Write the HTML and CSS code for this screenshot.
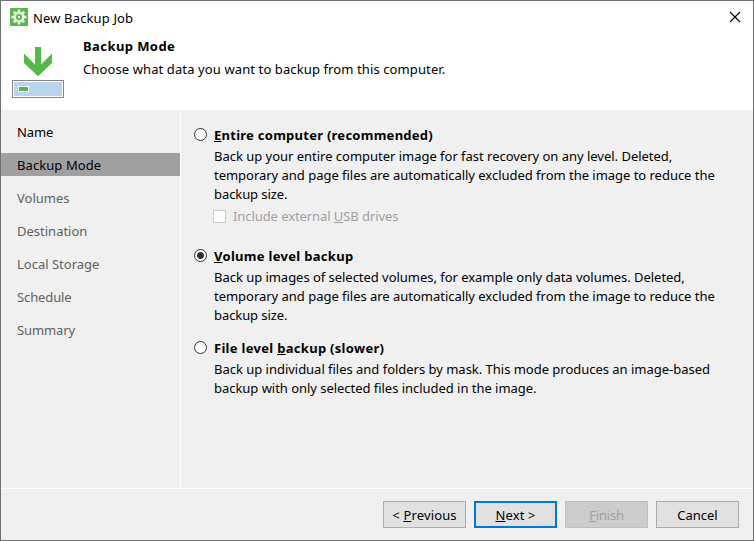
FILE: index.html
```html
<!DOCTYPE html>
<html lang="en">
<head>
<meta charset="utf-8">
<title>New Backup Job</title>
<link rel="stylesheet" href="styles.css">
</head>
<body>
<div class="window">
  <header class="header">
    <div class="titlebar">
      <svg class="gear" width="18" height="18" viewBox="0 0 18 18">
        <rect width="18" height="18" fill="#54b948"/>
        <g fill="#e6f5e4" transform="translate(9 9)">
          <rect x="-1.300" y="-7.500" width="2.600" height="15"/>
          <rect x="-1.300" y="-7.500" width="2.600" height="15" transform="rotate(45)"/>
          <rect x="-1.300" y="-7.500" width="2.600" height="15" transform="rotate(90)"/>
          <rect x="-1.300" y="-7.500" width="2.600" height="15" transform="rotate(135)"/>
          <circle r="5.500"/>
        </g>
        <circle cx="9" cy="9" r="3" fill="#54b948"/>
        <circle cx="9" cy="9" r="1.200" fill="#e6f5e4"/>
      </svg>
      <span class="title t-title">New Backup Job</span>
      <svg class="close" width="10" height="10" viewBox="0 0 10 10"><path d="M0 0L10 10M10 0L0 10" stroke="#000" stroke-width="1.1"/></svg>
    </div>
    <div class="intro">
      <svg class="drive" width="52" height="52" viewBox="0 0 52 52">
        <path d="M23 1h6v17.500l11-11v9.500L26 30.300 12 17V7.500l11 11z" fill="#54b948"/>
        <rect x=".5" y="34.500" width="51" height="17" fill="#fff" stroke="#848484"/>
        <rect x="2" y="36" width="48" height="14" fill="#bad4ed"/>
        <rect x="6" y="40" width="11" height="6" fill="#fff"/>
        <rect x="7" y="41" width="9" height="4" fill="#54b948"/>
      </svg>
      <div class="intro-text">
        <h1 class="heading"><span class="t-head">Backup Mode</span></h1>
        <p class="sub"><span class="t-sub">Choose what data you want to backup from this computer.</span></p>
      </div>
    </div>
  </header>
  <div class="body">
    <nav class="steps">
      <div class="step done"><span class="t-tight">Name</span></div>
      <div class="step current"><span class="t-wide">Backup Mode</span></div>
      <div class="step">Volumes</div>
      <div class="step">Destination</div>
      <div class="step">Local Storage</div>
      <div class="step"><span class="t-tight">Schedule</span></div>
      <div class="step"><span class="t-tight">Summary</span></div>
    </nav>
    <main class="options">
      <section class="option">
        <i class="radio"></i>
        <div>
          <h2><span class="t-o1"><u>E</u>ntire computer (recommended)</span></h2>
          <p><span class="t-a1">Back up your entire computer image for fast recovery on any level. Deleted,</span></p>
          <p><span class="t-a2">temporary and page files are automatically excluded from the image to reduce the</span></p>
          <p><span class="t-a3">backup size.</span></p>
          <div class="check"><i class="box"></i><span class="t-check">Include external <u>U</u>SB drives</span></div>
        </div>
      </section>
      <section class="option">
        <i class="radio on"></i>
        <div>
          <h2><span class="t-o2"><u>V</u>olume level backup</span></h2>
          <p><span class="t-b1">Back up images of selected volumes, for example only data volumes. Deleted,</span></p>
          <p><span class="t-a2">temporary and page files are automatically excluded from the image to reduce the</span></p>
          <p><span class="t-a3">backup size.</span></p>
        </div>
      </section>
      <section class="option">
        <i class="radio"></i>
        <div>
          <h2><span class="t-o3">File level <u>b</u>ackup (slower)</span></h2>
          <p><span class="t-c1">Back up individual files and folders by mask. This mode produces an image-based</span></p>
          <p><span class="t-c2">backup with only selected files included in the image.</span></p>
        </div>
      </section>
    </main>
  </div>
  <footer class="footer">
    <button class="btn"><span class="t-prev">&lt; <u>P</u>revious</span></button>
    <button class="btn primary"><span class="t-next"><u>N</u>ext &gt;</span></button>
    <button class="btn off"><span class="t-fin"><u>F</u>inish</span></button>
    <button class="btn"><span class="t-can">Cancel</span></button>
  </footer>
</div>
</body>
</html>
```
FILE: styles.css
```css
* { box-sizing: border-box; margin: 0; padding: 0; }
body { width: 754px; height: 541px; overflow: hidden; font: 13px/19px "Noto Sans", "Open Sans", sans-serif; color: #000; }
span { white-space: nowrap; }
u { text-decoration: underline; text-decoration-thickness: 1px; text-underline-offset: 1px; text-decoration-skip-ink: none; }

.window { width: 754px; height: 541px; border: 1px solid #707070; background: #f0f0f0; display: flex; flex-direction: column; }

.header { height: 109px; background: #fff; flex: none; }
.titlebar { height: 35px; padding: 7px 13px 0 9px; display: flex; align-items: flex-start; }
.title { margin-left: 5px; line-height: 20px; }
.close { margin: 4px 0 0 auto; overflow: visible; }
.intro { display: flex; padding-left: 11px; }
.drive { margin-top: 10px; }
.intro-text { margin: 1px 0 0 19px; }
.heading { font-size: 13px; line-height: 19px; }
.sub { margin-top: 4px; }

.body { height: 379px; border-bottom: 1px solid #fff; display: flex; flex: none; }
.steps { width: 180px; border-right: 1px solid #fff; padding-top: 10px; }
.step { height: 23px; line-height: 23px; margin-bottom: 10px; padding: 1px 0 0 16px; color: #606060; }
.step.done { color: #000; }
.step.current { color: #000; background: #a0a0a0; }

.options { padding: 16px 0 0 13px; }
.option { display: flex; align-items: flex-start; }
.option h2 { font-size: 13px; line-height: 19px; margin-bottom: 2px; }
.option + .option { margin-top: 14px; }
.option:nth-child(2) { margin-top: 20px; }
.radio { width: 13px; height: 13px; border: 1px solid #333; border-radius: 50%; background: #fff; margin: 2px 7px 0 0; flex: none; }
.radio.on { background: radial-gradient(circle, #333 3.1px, #fff 3.800px); }
.check { height: 23px; display: flex; align-items: flex-start; color: #a0a0a0; margin-left: -1px; padding-top: 4px; }
.check span { line-height: 19px; margin-top: -1px; }
.box { width: 13px; height: 13px; background: #fff; border: 1px solid #ccc; margin: 2px 7px 0 0; flex: none; }

.footer { display: flex; justify-content: flex-end; gap: 8px; padding: 12px 14px 0 0; }
.btn { width: 83px; height: 27px; padding-top: 2px; font: inherit; color: #000; background: #e1e1e1; border: 1px solid #adadad; }
.btn.primary { border: 2px solid #0078d7; }
.btn.off { background: #ccc; border-color: #bfbfbf; color: #a0a0a0; }

/* Tracking per label */
.t-title { letter-spacing: .14px; }
.t-head { letter-spacing: .42px; }
.t-sub { letter-spacing: .11px; }
.t-tight { letter-spacing: -.12px; }
.t-wide { letter-spacing: .08px; }
.t-o1 { letter-spacing: .26px; }
.t-o2, .t-o3 { letter-spacing: .3px; }
.t-a1, .t-c1 { letter-spacing: -.02px; }
.t-a2 { letter-spacing: -.025px; }
.t-a3 { letter-spacing: -.08px; }
.t-b1 { letter-spacing: -.035px; }
.t-c2 { letter-spacing: -.035px; }
.t-check { letter-spacing: -.08px; }
.t-prev { letter-spacing: .15px; }
.t-next { letter-spacing: .1px; }
.t-fin { letter-spacing: -.2px; }
```
